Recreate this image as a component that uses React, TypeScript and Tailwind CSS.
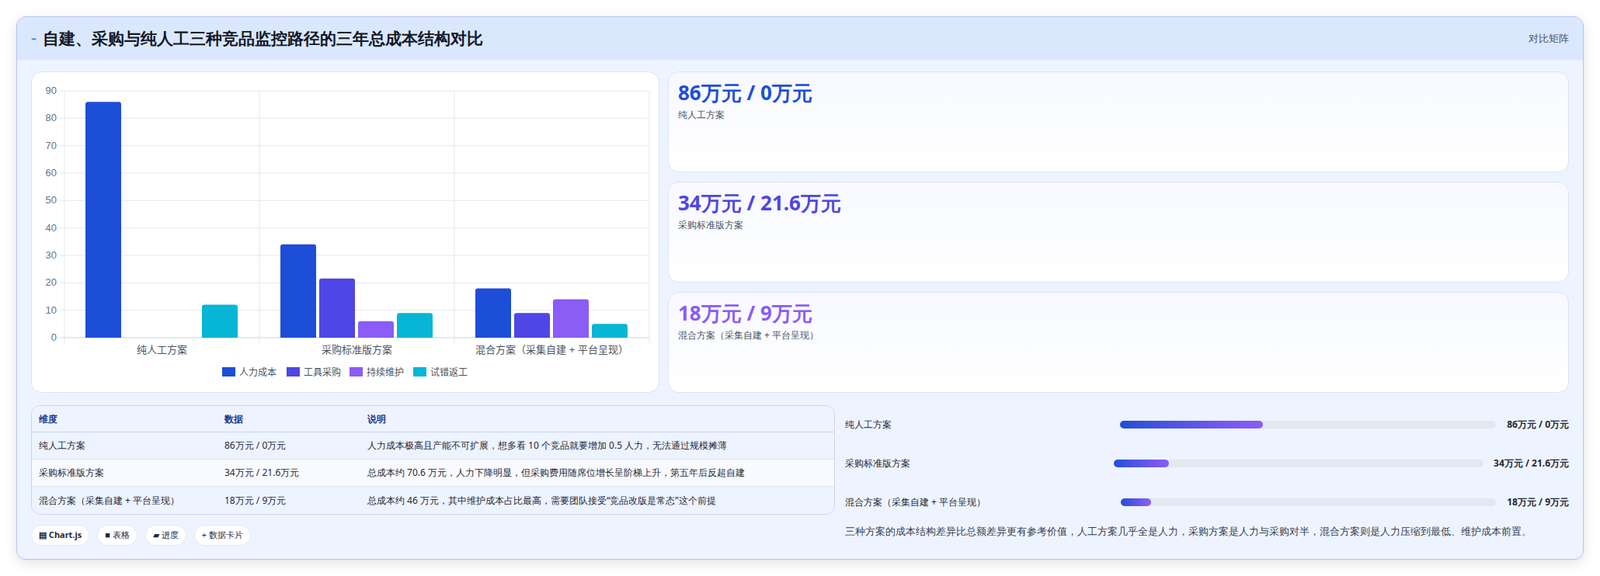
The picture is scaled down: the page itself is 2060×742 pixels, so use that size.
import React from "react";

const COLORS = ["#1d4ed8", "#4f46e5", "#8b5cf6", "#06b6d4"];
const SERIES = ["人力成本", "工具采购", "持续维护", "试错返工"];
const GROUPS = [
  { name: "纯人工方案", v: [86, 0, 0, 12] },
  { name: "采购标准版方案", v: [34, 21.6, 6, 9] },
  { name: "混合方案（采集自建 + 平台呈现）", v: [18, 9, 14, 5] },
];

function Chart() {
  const L = 42, R = 795, T = 24, B = 342;
  const s = (B - T) / 90;
  const gw = (R - L) / 3;
  const font = "'Liberation Sans','Noto Sans CJK SC',sans-serif";
  return (
    <svg width="809" height="412" viewBox="0 0 809 412" style={{ fontFamily: font }}>
      {[0, 10, 20, 30, 40, 50, 60, 70, 80, 90].map((t) => (
        <g key={t}>
          <line x1={L - 6} x2={R} y1={B - t * s} y2={B - t * s} stroke={t === 0 ? "#cbd5e1" : "#e2e8f0"} />
          <text x={L - 10} y={B - t * s + 4} fontSize="13" fill="#6b7280" textAnchor="end">{t}</text>
        </g>
      ))}
      {[0, 1, 2, 3].map((i) => (
        <line key={i} x1={L + i * gw} x2={L + i * gw} y1={T} y2={B + 8} stroke="#e5e7eb" />
      ))}
      {GROUPS.map((g, gi) => (
        <g key={gi}>
          {g.v.map((v, i) => {
            const h = v * s;
            if (h <= 0) return null;
            const x = L + gi * gw + 27 + i * 50;
            return <path key={i} d={`M${x} ${B} V${B - h + 3} Q${x} ${B - h} ${x + 3} ${B - h} H${x + 43} Q${x + 46} ${B - h} ${x + 46} ${B - h + 3} V${B} Z`} fill={COLORS[i]} />;
          })}
          <text x={L + gi * gw + gw / 2} y={B + 20} fontSize="13" fill="#4b5563" textAnchor="middle">{g.name}</text>
        </g>
      ))}
      {[245, 328, 409, 491].map((x, i) => (
        <g key={i}>
          <rect x={x} y={380} width={17} height={12} fill={COLORS[i]} />
          <text x={x + 22} y={391} fontSize="12" fill="#4b5563">{SERIES[i]}</text>
        </g>
      ))}
    </svg>
  );
}

const stats = [
  { v: "86万元 / 0万元", l: "纯人工方案", c: "text-[#1d4ed8]" },
  { v: "34万元 / 21.6万元", l: "采购标准版方案", c: "text-[#4f46e5]" },
  { v: "18万元 / 9万元", l: "混合方案（采集自建 + 平台呈现）", c: "text-[#8b5cf6]" },
];

const rows = [
  ["纯人工方案", "86万元 / 0万元", "人力成本极高且产能不可扩展，想多看 10 个竞品就要增加 0.5 人力，无法通过规模摊薄", "bg-[#edf3ff]"],
  ["采购标准版方案", "34万元 / 21.6万元", "总成本约 70.6 万元，人力下降明显，但采购费用随席位增长呈阶梯上升，第五年后反超自建", "bg-[#f8faff]"],
  ["混合方案（采集自建 + 平台呈现）", "18万元 / 9万元", "总成本约 46 万元，其中维护成本占比最高，需要团队接受\u201c竞品改版是常态\u201d这个前提", "bg-[#edf3ff]"],
];

const bars = [
  { l: "纯人工方案", v: "86万元 / 0万元", w: 38, lw: "w-[354px]", vw: "w-[84px]" },
  { l: "采购标准版方案", v: "34万元 / 21.6万元", w: 15, lw: "w-[346px]", vw: "w-[100px]" },
  { l: "混合方案（采集自建 + 平台呈现）", v: "18万元 / 9万元", w: 8, lw: "w-[355px]", vw: "w-[84px]" },
];

export default function App() {
  return (
    <div className="w-[2060px] h-[742px] bg-white p-[21px] font-['Liberation_Sans','Noto_Sans_CJK_SC',sans-serif]">
      <div className="w-[2018px] h-[700px] rounded-[12px] border border-[#b4c3f5] bg-[#eef4ff] shadow-[0_4px_16px_rgba(0,0,0,0.12)] overflow-hidden flex flex-col">
        <div className="h-[55px] bg-[#dbe7fd] flex items-center justify-between px-[18px] shrink-0">
          <div className="flex items-center gap-[8px]">
            <span className="text-[#3b5bdb] text-[12px]">⌁</span>
            <span className="text-[21px] font-bold text-[#111827]">自建、采购与纯人工三种竞品监控路径的三年总成本结构对比</span>
          </div>
          <span className="text-[13px] text-[#4b5563]">对比矩阵</span>
        </div>
        <div className="flex-1 px-[18px] pt-[15px] flex flex-col gap-[16px]">
          <div className="flex gap-[11px] h-[414px]">
            <div className="w-[809px] h-[414px] bg-white rounded-[14px] border border-[#dbe4f3]">
              <Chart />
            </div>
            <div className="flex-1 flex flex-col gap-[12px]">
              {stats.map((s) => (
                <div key={s.l} className="flex-1 rounded-[14px] border border-[#dbe4f3] bg-gradient-to-b from-[#f7f9ff] to-white px-[12px] pt-[8px]">
                  <div className={`text-[26px] font-bold leading-[36px] font-['DejaVu_Sans','Noto_Sans_CJK_SC',sans-serif] ${s.c}`}>{s.v}</div>
                  <div className="text-[12px] text-[#4b5563] mt-[2px]">{s.l}</div>
                </div>
              ))}
            </div>
          </div>
          <div className="flex gap-[12px]">
            <div className="w-[1035px] flex flex-col gap-[13px]">
              <div className="rounded-[12px] border border-[#cbd6ea] overflow-hidden text-[12px] text-[#1f2937]">
                <div className="flex h-[34px] items-center bg-[#eef4ff] text-[#1e3a8a] font-bold border-b border-[#cbd6ea]">
                  <div className="w-[248px] pl-[9px]">维度</div>
                  <div className="w-[184px]">数据</div>
                  <div className="flex-1">说明</div>
                </div>
                {rows.map((r, i) => (
                  <div key={i} className={`flex h-[35px] items-center ${r[3]} ${i < 2 ? "border-b border-[#dde5f2]" : ""}`}>
                    <div className="w-[248px] pl-[9px]">{r[0]}</div>
                    <div className="w-[184px]">{r[1]}</div>
                    <div className="flex-1">{r[2]}</div>
                  </div>
                ))}
              </div>
              <div className="flex gap-[10px] text-[11px] text-[#1f2937]">
                {["▤ Chart.js", "■ 表格", "▰ 进度", "+ 数据卡片"].map((b, i) => (
                  <span key={b} className={`h-[27px] px-[9px] rounded-full bg-white border border-[#e2e8f0] flex items-center ${i === 0 ? "font-bold" : ""}`}>{b}</span>
                ))}
              </div>
            </div>
            <div className="flex-1 flex flex-col pt-[7px] pl-[1px]">
              {bars.map((b, i) => (
                <div key={i} className="flex items-center h-[36px] mb-[14px] text-[12px] text-[#1f2937]">
                  <div className={`${b.lw} shrink-0`}>{b.l}</div>
                  <div className="flex-1 h-[10px] rounded-full bg-[#e2e8f0] mr-[10px]">
                    <div className="h-full rounded-full bg-gradient-to-r from-[#1d4ed8] to-[#8b5cf6]" style={{ width: `${b.w}%` }} />
                  </div>
                  <div className={`${b.vw} text-right font-bold`}>{b.v}</div>
                </div>
              ))}
              <div className="text-[13px] text-[#374151] mt-[-4px]">三种方案的成本结构差异比总额差异更有参考价值，人工方案几乎全是人力，采购方案是人力与采购对半，混合方案则是人力压缩到最低、维护成本前置。</div>
            </div>
          </div>
        </div>
      </div>
    </div>
  );
}
